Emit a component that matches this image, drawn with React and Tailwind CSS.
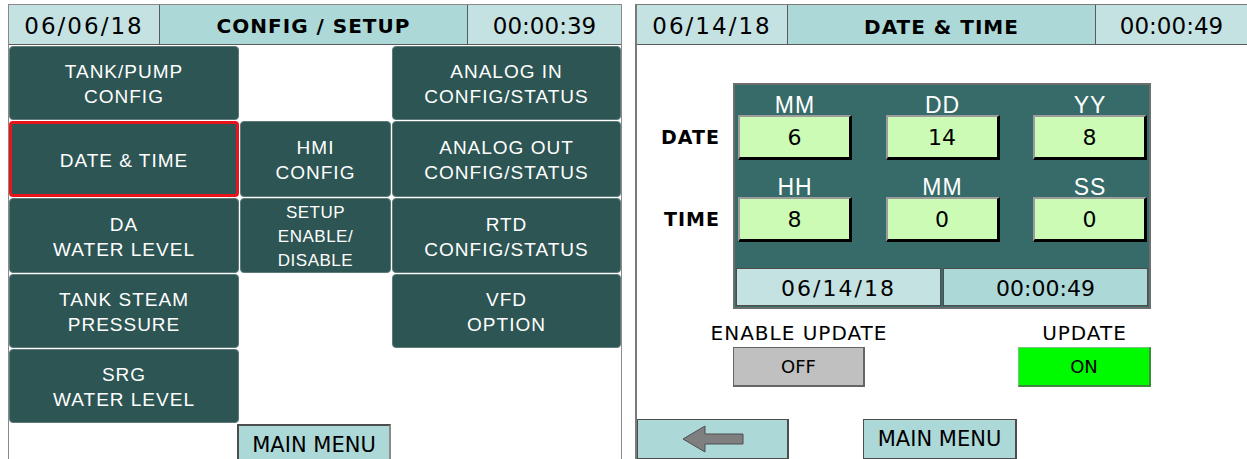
import React from 'react';

const hdr = "font-['DejaVu_Sans',sans-serif]";
const btn = "font-['Liberation_Sans',Arial,sans-serif]";

function Header({ date, title, time }) {
  return (
    <div className={`flex h-[40px] border-b border-[#5a5a5a] text-black ${hdr}`}>
      <div className="w-[151px] flex items-center justify-center pt-[4px] bg-[#c5e2e3] border-r border-[#5a5a5a] text-[23px] tracking-[2px]">
        {date}
      </div>
      <div className="w-[308px] flex items-center justify-center pt-[4px] bg-[#acd8d8] border-r border-[#5a5a5a] text-[20px] font-bold tracking-[1px]">
        {title}
      </div>
      <div className="flex-1 flex items-center justify-center pt-[4px] bg-[#c5e2e3] text-[23px]">{time}</div>
    </div>
  );
}

function Tile({ lines, small, selected, className = '' }) {
  return (
    <div
      className={`flex flex-col items-center justify-center pt-[3px] rounded-[4px] bg-[#2d5553] text-white ${btn} ${
        small ? 'text-[17px] leading-[24px] tracking-[0.5px]' : 'text-[19px] leading-[25px] tracking-[1px]'
      } ${selected ? 'border-[3px] border-[#e8141c] rounded-[2px]' : 'border border-[#5d7b79]'} ${className}`}
    >
      {lines.map((l) => (
        <span key={l}>{l}</span>
      ))}
    </div>
  );
}

function ConfigScreen() {
  return (
    <div className="ml-[8px] w-[614px] h-[455px] border-l border-t border-r border-[#8a8a8a] flex flex-col">
      <Header date="06/06/18" title="CONFIG / SETUP" time="00:00:39" />
      <div className="grid grid-cols-[230px_151px_229px] grid-rows-[74px_76px_75px_74px_74px] gap-[1px] mt-[1px]">
        <Tile lines={['TANK/PUMP', 'CONFIG']} className="col-start-1 row-start-1" />
        <Tile lines={['ANALOG IN', 'CONFIG/STATUS']} className="col-start-3 row-start-1" />
        <Tile lines={['DATE & TIME']} selected className="col-start-1 row-start-2" />
        <Tile lines={['HMI', 'CONFIG']} className="col-start-2 row-start-2 text-[18px]" />
        <Tile lines={['ANALOG OUT', 'CONFIG/STATUS']} className="col-start-3 row-start-2" />
        <Tile lines={['DA', 'WATER LEVEL']} className="col-start-1 row-start-3" />
        <Tile lines={['SETUP', 'ENABLE/', 'DISABLE']} small className="col-start-2 row-start-3" />
        <Tile lines={['RTD', 'CONFIG/STATUS']} className="col-start-3 row-start-3" />
        <Tile lines={['TANK STEAM', 'PRESSURE']} className="col-start-1 row-start-4" />
        <Tile lines={['VFD', 'OPTION']} className="col-start-3 row-start-4" />
        <Tile lines={['SRG', 'WATER LEVEL']} className="col-start-1 row-start-5" />
      </div>
      <div className="pl-[228px] pt-[1px]">
        <div className={`w-[154px] h-[38px] flex items-center justify-center pt-[6px] bg-[#acd8d8] border-2 border-[#4d4d4d] border-r-[#8a8a8a] text-[21px] text-black ${hdr}`}>
          MAIN MENU
        </div>
      </div>
    </div>
  );
}

function Field({ value }) {
  return (
    <div className="h-[45px] flex items-center justify-center bg-[#ccfbb5] border-t-2 border-l-2 border-[#9c9c9c] border-b-[3px] border-r-[3px] border-b-black border-r-black text-[22px] text-black">
      {value}
    </div>
  );
}

function Labels({ items, h }) {
  return (
    <div className={`${h} grid grid-cols-[114px_114px_114px] justify-between items-end pl-[3px] pr-[2px]`}>
      {items.map((t, i) => (
        <div key={i} className={`text-center text-white text-[23px] leading-none -mb-[2px] ${btn} tracking-[1px]`}>
          {t}
        </div>
      ))}
    </div>
  );
}

function DateTimeScreen() {
  return (
    <div className={`ml-[13px] w-[612px] h-[455px] border-l-2 border-t border-[#7a7a7a] flex flex-col ${hdr}`}>
      <Header date="06/14/18" title="DATE & TIME" time="00:00:49" />
      <div className="flex mt-[38px]">
        <div className="w-[83px] flex flex-col items-end pt-[32px] text-[19px] font-bold text-black tracking-[1px]">
          <div className="h-[45px] flex items-center">DATE</div>
          <div className="h-[37px]" />
          <div className="h-[45px] flex items-center">TIME</div>
        </div>
        <div className="ml-[13px] w-[418px] border-2 border-[#6e6e6e] bg-[#366b6a] flex flex-col">
          <Labels items={['MM', 'DD', 'YY']} h="h-[30px]" />
          <div className="grid grid-cols-[114px_114px_114px] justify-between pl-[3px] pr-[2px]">
            <Field value="6" />
            <Field value="14" />
            <Field value="8" />
          </div>
          <Labels items={['HH', 'MM', 'SS']} h="h-[37px]" />
          <div className="grid grid-cols-[114px_114px_114px] justify-between pl-[3px] pr-[2px]">
            <Field value="8" />
            <Field value="0" />
            <Field value="0" />
          </div>
          <div className="flex gap-[2px] px-[1px] mt-[26px] mb-[1px] h-[38px] text-[22px] text-black">
            <div className="w-[205px] flex items-center justify-center pt-[2px] bg-[#c5e2e3] border border-[#4d4d4d] tracking-[2px]">
              06/14/18
            </div>
            <div className="flex-1 flex items-center justify-center pt-[2px] bg-[#acd8d8] border border-[#4d4d4d]">
              00:00:49
            </div>
          </div>
        </div>
      </div>
      <div className="flex ml-[96px] mt-[13px] gap-[153px] text-black">
        <div className="w-[132px] flex flex-col items-center">
          <div className="h-[22px] whitespace-nowrap text-[20px] leading-[22px] tracking-[1px]">ENABLE UPDATE</div>
          <div className="mt-[3px] w-[132px] h-[40px] flex items-center justify-center bg-[#c0c0c0] border border-[#666] border-r-2 border-b-2 text-[18px]">
            OFF
          </div>
        </div>
        <div className="w-[133px] flex flex-col items-center">
          <div className="h-[22px] whitespace-nowrap text-[20px] leading-[22px] tracking-[1px]">UPDATE</div>
          <div className="mt-[3px] w-[133px] h-[40px] flex items-center justify-center bg-[#00fa00] border border-[#7fbf7f] border-r-2 border-b-2 border-r-[#3d8a3d] border-b-[#3d8a3d] text-[18px]">
            ON
          </div>
        </div>
      </div>
      <div className="flex mt-[32px] text-black">
        <div className="w-[152px] h-[40px] flex items-center justify-center bg-[#acd8d8] border border-[#4d4d4d] border-r-2">
          <svg width="62" height="28" viewBox="0 0 62 28">
            <polygon points="1,14 23,1 23,9 61,9 61,19 23,19 23,27" fill="#7f7f7f" stroke="#4f4f4f" strokeWidth="1" />
          </svg>
        </div>
        <div className="ml-[74px] w-[154px] h-[40px] flex items-center justify-center pt-[2px] bg-[#acd8d8] border border-[#4d4d4d] border-r-2 text-[21px]">
          MAIN MENU
        </div>
      </div>
    </div>
  );
}

export default function App() {
  return (
    <div className="w-[1247px] h-[459px] bg-white flex items-start pt-[4px] overflow-hidden">
      <ConfigScreen />
      <DateTimeScreen />
    </div>
  );
}
